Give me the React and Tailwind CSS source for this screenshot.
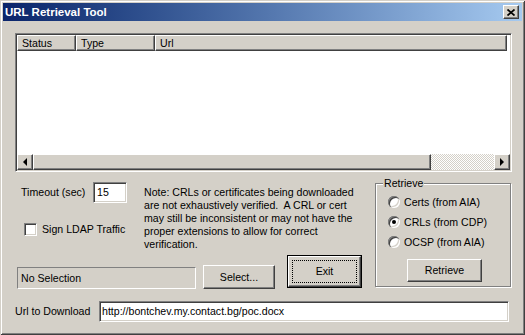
const raised = 'border border-t-white border-l-white border-r-[#404040] border-b-[#404040] shadow-[inset_-1px_-1px_0_#808080]'
const sunken = 'border border-t-[#808080] border-l-[#808080] border-r-white border-b-white shadow-[inset_1px_1px_0_#404040,inset_-1px_-1px_0_#d4d0c8]'

const Arrow = ({ dir }) => (
  <svg width="4" height="8" viewBox="0 0 4 8">
    {dir === 'left' ? <polygon points="4,0 4,8 0,4" fill="#000" /> : <polygon points="0,0 0,8 4,4" fill="#000" />}
  </svg>
)

const Radio = ({ label, checked }) => (
  <div className="h-[20px] flex items-center">
    <div className="w-[12px] h-[12px] rounded-full bg-white flex items-center justify-center shadow-[inset_1px_1px_0_#808080,inset_2px_2px_0_#404040,inset_-1px_-1px_0_#fff,inset_-2px_-2px_0_#d4d0c8]">
      {checked && <div className="w-[4px] h-[4px] rounded-full bg-black" />}
    </div>
    <span className="ml-[4px]">{label}</span>
  </div>
)

export default function App() {
  return (
    <div className="w-[525px] h-[335px] bg-[#d4d0c8] p-[3px] flex flex-col overflow-hidden text-black text-[10.6px] leading-[13px] font-['Liberation_Sans',Arial,sans-serif] shadow-[inset_1px_1px_0_#d4d0c8,inset_-1px_-1px_0_#404040,inset_2px_2px_0_#fff,inset_-2px_-2px_0_#808080]">
      {/* title bar */}
      <div className="h-[18px] shrink-0 flex items-center justify-between pl-[2px] pr-[3px] bg-linear-to-r from-[#0a246a] to-[#a6caf0]">
        <span className="text-white font-bold text-[11.5px]">URL Retrieval Tool</span>
        <div className={`w-[16px] h-[14px] bg-[#d4d0c8] flex items-center justify-center ${raised}`}>
          <svg width="8" height="7" viewBox="0 0 8 7">
            <path d="M0.5 0.5L7.5 6.5M7.5 0.5L0.5 6.5" stroke="#000" strokeWidth="1.7" />
          </svg>
        </div>
      </div>

      <div className="flex flex-col pl-[12px] pt-[12px]">
        {/* list view */}
        <div className={`w-[497px] h-[139px] flex flex-col bg-white ${sunken} p-[1px]`}>
          <div className="h-[16px] flex shrink-0 bg-[#d4d0c8]">
            <div className={`w-[59px] pl-[4px] flex items-center ${raised}`}>Status</div>
            <div className={`w-[79px] pl-[4px] flex items-center ${raised}`}>Type</div>
            <div className={`w-[352px] pl-[4px] flex items-center ${raised}`}>Url</div>
            <div className="flex-1 bg-white" />
          </div>
          <div className="flex-1" />
          <div className="h-[16px] flex shrink-0">
            <div className={`w-[16px] bg-[#d4d0c8] flex items-center justify-center ${raised}`}><Arrow dir="left" /></div>
            <div className={`w-[398px] bg-[#d4d0c8] ${raised}`} />
            <div className="flex-1 bg-[repeating-conic-gradient(#d4d0c8_0_25%,#fff_0_50%)] bg-size-[2px_2px]" />
            <div className={`w-[16px] bg-[#d4d0c8] flex items-center justify-center ${raised}`}><Arrow dir="right" /></div>
          </div>
        </div>

        {/* middle */}
        <div className="flex mt-[10px]">
          <div className="w-[360px] flex flex-col">
            <div className="h-[73px] flex">
              <div className="w-[129px] flex flex-col">
                <div className="h-[21px] flex items-center">
                  <span className="w-[78px] pl-[6px]">Timeout (sec)</span>
                  <div className={`w-[34px] h-[21px] bg-white pl-[3px] flex items-center ${sunken}`}>15</div>
                </div>
                <div className="mt-[20px] flex items-center">
                  <div className={`ml-[9px] w-[13px] h-[13px] bg-white ${sunken}`} />
                  <span className="ml-[5px]">Sign LDAP Traffic</span>
                </div>
              </div>
              <p className="mt-[4px]">
                Note: CRLs or certificates being downloaded<br />
                are not exhaustively verified.&nbsp; A CRL or cert<br />
                may still be inconsistent or may not have the<br />
                proper extensions to allow for correct<br />
                verification.
              </p>
            </div>
            <div className="flex items-start pl-[2px]">
              <div className="mt-[12px] w-[179px] h-[22px] border border-t-[#808080] border-l-[#808080] border-r-white border-b-white pl-[3px] flex items-center">No Selection</div>
              <div className={`mt-[10px] ml-[7px] w-[72px] h-[24px] flex items-center justify-center ${raised}`}>Select...</div>
              <div className="ml-[12px] w-[75px] h-[33px] border border-black flex">
                <div className={`flex-1 flex p-[3px] ${raised}`}>
                  <div className="flex-1 border border-dotted border-black flex items-center justify-center">Exit</div>
                </div>
              </div>
            </div>
          </div>

          {/* retrieve group */}
          <div className="mt-[1px] w-[136px] h-[104px] relative border border-[#808080] shadow-[1px_1px_0_#fff,inset_1px_1px_0_#fff] pl-[12px] pt-[8px] flex flex-col">
            <span className="absolute -top-[7px] left-[7px] px-[1px] bg-[#d4d0c8]">Retrieve</span>
            <Radio label="Certs (from AIA)" />
            <Radio label="CRLs (from CDP)" checked />
            <Radio label="OCSP (from AIA)" />
            <div className={`mt-[7px] ml-[19px] w-[75px] h-[23px] flex items-center justify-center ${raised}`}>Retrieve</div>
          </div>
        </div>

        {/* url row */}
        <div className="flex items-center mt-[12px]">
          <span className="w-[84px]">Url to Download</span>
          <div className={`w-[410px] h-[21px] bg-white pl-[2px] flex items-center ${sunken}`}>http://bontchev.my.contact.bg/poc.docx</div>
        </div>
      </div>
    </div>
  )
}
